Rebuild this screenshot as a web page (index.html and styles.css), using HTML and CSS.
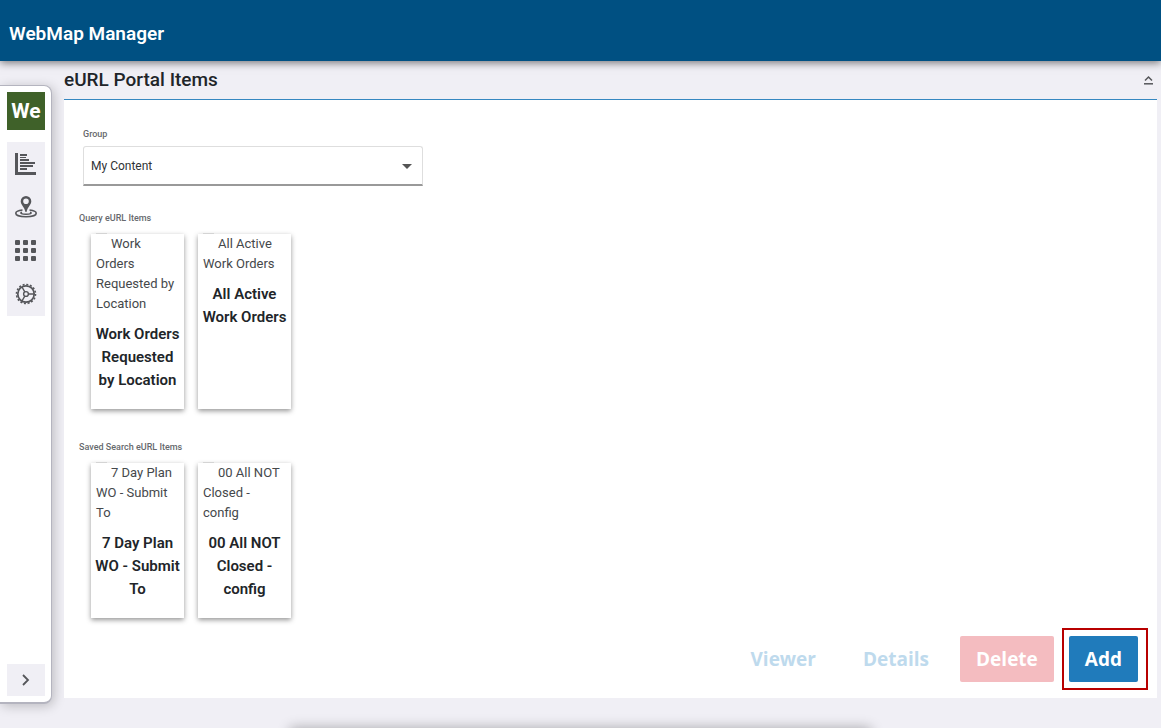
FILE: index.html
```html
<!DOCTYPE html>
<html lang="en">
<head>
<meta charset="utf-8">
<meta name="viewport" content="width=device-width, initial-scale=1">
<title>WebMap Manager</title>
<link rel="stylesheet" href="styles.css">
</head>
<body>
<header class="topbar"><h1 class="topbar-title">WebMap Manager</h1></header>
<div class="shell">
  <nav class="sidebar" aria-label="Main">
    <a class="brand" href="#">We</a>
    <div class="nav-group">
      <button class="nav-button" type="button" aria-label="Reports">
        <svg width="22" height="22" viewBox="0 0 22 22" fill="#55565a"><path d="M0 0h3v19h18v3H0zM5 1h7v2H5zM5 4h6v1H5zM5 6h9v2H5zM5 9h15v2H5zM5 12h13v2H5zM5 15h7v2H5z"/></svg>
      </button>
      <button class="nav-button" type="button" aria-label="Map">
        <svg width="22" height="22" viewBox="0 0 22 22"><path fill="#55565a" fill-rule="evenodd" d="M11 0a5.300 5.300 0 0 1 5.300 5.300c0 3.500-3.600 5.500-4.800 10.700h-1C9.300 10.800 5.700 8.800 5.700 5.300A5.300 5.300 0 0 1 11 0zm0 2.500a2.800 2.800 0 1 0 0 5.600 2.800 2.800 0 0 0 0-5.600z"/><path fill="none" stroke="#55565a" stroke-width="1.600" d="M7.500 14C3 14.500.8 15.500.8 17.200c0 2.100 4.500 3.600 10.200 3.600s10.200-1.500 10.200-3.600c0-1.700-2.200-2.700-6.700-3.200"/><path fill="none" stroke="#55565a" stroke-width="1.500" d="M7 16.200c-3 1 .2 2 4 2s7-1 4-2"/></svg>
      </button>
      <button class="nav-button" type="button" aria-label="Apps">
        <svg width="22" height="22" viewBox="0 0 22 22" fill="#55565a"><rect x="0" y="0" width="5" height="5" rx="1"/><rect x="8" y="0" width="5" height="5" rx="1"/><rect x="16" y="0" width="5" height="5" rx="1"/><rect x="0" y="8" width="5" height="5" rx="1"/><rect x="8" y="8" width="5" height="5" rx="1"/><rect x="16" y="8" width="5" height="5" rx="1"/><rect x="0" y="16" width="5" height="5" rx="1"/><rect x="8" y="16" width="5" height="5" rx="1"/><rect x="16" y="16" width="5" height="5" rx="1"/></svg>
      </button>
      <button class="nav-button" type="button" aria-label="Settings">
        <svg width="22" height="22" viewBox="0 0 22 22" fill="none" stroke="#55565a"><circle cx="11" cy="11" r="9.500" stroke-width="1.600" stroke-dasharray="2 1.730"/><circle cx="11" cy="11" r="8.200" stroke-width="1.700"/><circle cx="11" cy="11" r="2.400" stroke-width="1.400"/><path stroke-width="1.400" d="M13.400 11H19M9.800 8.900 7 4M9.800 13.100 7 18"/></svg>
      </button>
    </div>
    <button class="expand" type="button" aria-label="Expand menu">
      <svg width="8" height="12" viewBox="0 0 8 12" fill="none" stroke="#55565a" stroke-width="1.800"><path d="m1 1 5 5-5 5"/></svg>
    </button>
  </nav>
  <main class="main">
    <div class="page-head">
      <h2 class="page-title">eURL Portal Items</h2>
      <button class="collapse" type="button" aria-label="Collapse section">
        <svg width="9" height="10" viewBox="0 0 9 10" fill="none" stroke="#55565a"><path stroke-width="1.500" d="M1 5.500 4.500 2 8 5.500"/><path stroke-width="1.500" d="M0 8.800h9"/></svg>
      </button>
    </div>
    <div class="panel">
      <div class="field">
        <label class="caption" for="group">Group</label>
        <div class="select-wrap">
          <select class="select" id="group"><option>My Content</option></select>
          <svg class="select-arrow" width="10" height="5" viewBox="0 0 10 5" aria-hidden="true"><path fill="#555" d="M0 0h10L5 5z"/></svg>
        </div>
      </div>
      <div class="sections">
        <section>
          <h3 class="caption">Query eURL Items</h3>
          <div class="cards">
            <article class="card"><p class="card-text">Work Orders Requested by Location</p><h4 class="card-title">Work Orders Requested by&nbsp;Location</h4></article>
            <article class="card"><p class="card-text">All Active Work Orders</p><h4 class="card-title">All Active Work Orders</h4></article>
          </div>
        </section>
        <section>
          <h3 class="caption">Saved Search eURL Items</h3>
          <div class="cards">
            <article class="card"><p class="card-text">7 Day Plan WO - Submit To</p><h4 class="card-title">7 Day Plan WO - Submit To</h4></article>
            <article class="card"><p class="card-text">00 All NOT Closed - config</p><h4 class="card-title">00 All NOT Closed - config</h4></article>
          </div>
        </section>
      </div>
      <div class="actions">
        <button class="button button-text" type="button" disabled>Viewer</button>
        <button class="button button-text" type="button" disabled>Details</button>
        <button class="button button-danger" type="button" disabled>Delete</button>
        <div class="highlight"><button class="button button-primary" type="button">Add</button></div>
      </div>
    </div>
  </main>
</div>
<div class="bottom-sheet"></div>
</body>
</html>
```
FILE: styles.css
```css
* { box-sizing: border-box; }

body {
  margin: 0;
  min-height: 100vh;
  display: flex;
  flex-direction: column;
  background: #f0eff5;
  color: #212529;
  font-family: Roboto, sans-serif;
}

h1, h2, h3, h4, p { margin: 0; }

button { font: inherit; border: 0; padding: 0; background: none; cursor: pointer; }

svg { display: block; }

.topbar {
  position: relative;
  z-index: 1;
  padding: 22px 9px 15px;
  background: #005082;
  box-shadow: 0 2px 8px rgba(0, 0, 0, 0.5);
}

.topbar-title { font-size: 19px; line-height: 24px; font-weight: 600; color: #fff; }

.shell { flex: 1; display: flex; gap: 12px; padding-right: 4px; }

.sidebar {
  flex: none;
  display: flex;
  flex-direction: column;
  width: 52px;
  margin: 24px 0;
  padding: 6px 6px 6px 7px;
  background: #fff;
  border: 1px solid #b4b4bf;
  border-width: 1px 1px 2px 0;
  border-radius: 0 8px 8px 0;
  box-shadow: 2px 2px 12px rgba(0, 0, 0, 0.22);
}

.brand {
  width: 38px;
  margin-bottom: 12px;
  background: #3f6129;
  color: #fff;
  font-size: 21px;
  line-height: 38px;
  font-weight: 700;
  text-align: center;
  text-decoration: none;
}

.nav-group {
  display: grid;
  grid-template-rows: repeat(4, 1fr);
  width: 38px;
  height: 174px;
  background: #f0eff5;
}

.nav-button { display: grid; place-items: center; }

.expand {
  display: grid;
  place-items: center;
  width: 38px;
  height: 32px;
  margin-top: auto;
  background: #f0eff5;
}

.main { flex: 1; min-width: 0; display: flex; flex-direction: column; margin-bottom: 30px; }

.page-head {
  display: flex;
  align-items: center;
  justify-content: space-between;
  height: 39px;
  padding-right: 4px;
  border-bottom: 1px solid #3587c0;
}

.page-title { font-size: 19px; line-height: 24px; font-weight: 500; }

.panel {
  flex: 1;
  display: flex;
  flex-direction: column;
  padding: 28px 9px 8px 15px;
  background: #fff;
}

.caption { display: block; font-size: 9px; line-height: 12px; font-weight: 500; color: #66696d; }

.field { width: 344px; max-width: 100%; padding-left: 4px; margin-bottom: 26px; }

.select-wrap { position: relative; margin-top: 6px; }

.select {
  appearance: none;
  display: block;
  width: 100%;
  height: 40px;
  padding: 0 24px 0 7px;
  border: 1px solid #dedede;
  border-bottom: 2px solid #999;
  border-radius: 3px 3px 0 0;
  background: #fff;
  color: #303336;
  font: 12px/16px Roboto, sans-serif;
}

.select-arrow { position: absolute; right: 11px; top: 18px; pointer-events: none; }

.sections { display: grid; gap: 32px; margin-bottom: 8px; }

.cards { display: flex; flex-wrap: wrap; gap: 14px; margin: 10px 12px 0; }

.card {
  position: relative;
  width: 93px;
  padding-bottom: 17px;
  background: #fff;
  box-shadow: 0 2px 5px rgba(0, 0, 0, 0.42);
}

.card::before {
  content: "";
  position: absolute;
  left: 5px;
  top: -1px;
  width: 11px;
  height: 1px;
  background: #d4d4d4;
}

.card-text { padding: 0 4px 0 5px; font-size: 13px; line-height: 20px; text-indent: 15px; color: #45484b; }

.card-title { padding: 9px 4px 0; font-size: 15px; line-height: 23px; font-weight: 600; text-align: center; }

.actions { display: flex; justify-content: flex-end; align-items: center; margin-top: auto; }

.button {
  height: 46px;
  padding: 0 16px;
  border-radius: 2px;
  font: 700 19px/24px "Open Sans", sans-serif;
}

.button-text { margin-right: 15px; color: #bedaed; }
.button-danger { background: #f4bcc0; color: #fff; }
.button-primary { display: block; background: #207bbb; color: #fff; }

.highlight { margin-left: 8px; padding: 6px 8px 6px 5px; border: 2px solid #b80000; }

.bottom-sheet {
  position: fixed;
  top: 100%;
  left: 25%;
  width: 50%;
  height: 40px;
  box-shadow: 0 0 12px rgba(0, 0, 0, 0.3);
}
```
